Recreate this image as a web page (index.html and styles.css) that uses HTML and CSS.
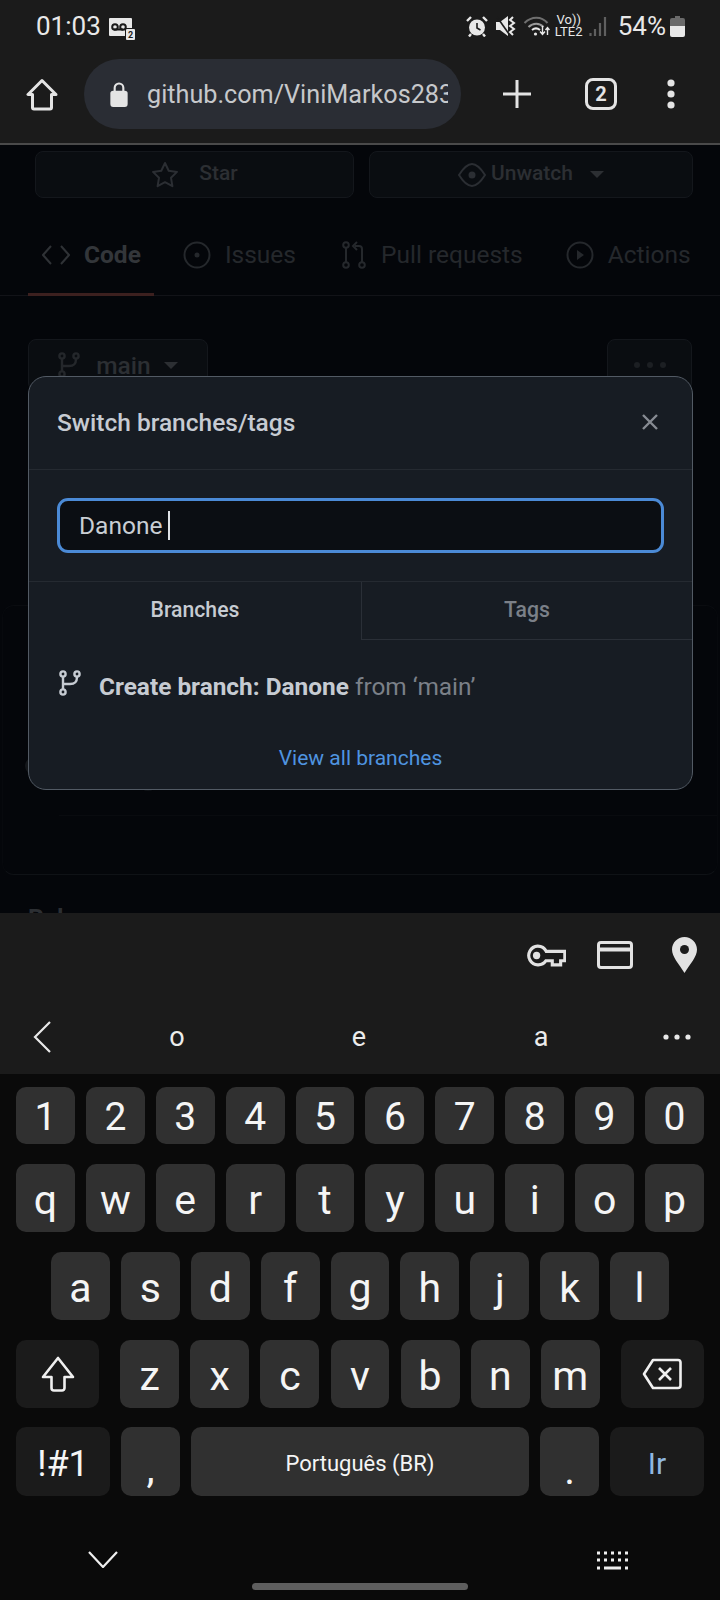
FILE: index.html
```html
<!DOCTYPE html>
<html lang="en">
  <head>
    <meta charset="UTF-8" />
    <meta name="viewport" content="width=device-width, initial-scale=1.0" />
    <title>Switch branches</title>
    <link rel="stylesheet" href="styles.css">
  </head>
  <body>
    <header class="chrome">
      <div class="statusbar">
        <span class="time">01:03</span>
        <svg class="ic-voicemail" viewBox="0 0 26 22"><path fill="#e8e8e8" d="M1 0h21a1 1 0 0 1 1 1v9h-7v8H1a1 1 0 0 1-1-1V1a1 1 0 0 1 1-1z"/><path fill="none" stroke="#1b1b1b" stroke-width="2" d="M5 11.5h9"/><circle cx="6" cy="9" r="2.8" fill="none" stroke="#1b1b1b" stroke-width="2"/><circle cx="14" cy="9" r="2.8" fill="none" stroke="#1b1b1b" stroke-width="2"/><rect x="17" y="11" width="9" height="11" rx="1" fill="#e8e8e8"/><text x="21.5" y="20" class="sim-no">2</text></svg>
        <span class="status-space"></span>
        <svg class="ic-alarm" viewBox="0 0 22 21"><circle cx="11" cy="11.5" r="8" fill="#e8e8e8"/><path d="M11 7v5l3.5 2" fill="none" stroke="#1b1b1b" stroke-width="1.6"/><path d="M1 5l4-4M21 5l-4-4M5 18l-2 2.5M17 18l2 2.5" stroke="#e8e8e8" stroke-width="2.4" fill="none"/></svg>
        <svg class="ic-mute" viewBox="0 0 20 20"><path fill="#e8e8e8" d="M0 6h4l8-6v20l-8-6H0z"/><path d="M1 1l12 17" stroke="#1b1b1b" stroke-width="1.6"/><path d="M17 1l-3 3 4 3-4 3 4 3-4 3 3 3" fill="none" stroke="#e8e8e8" stroke-width="2"/></svg>
        <svg class="ic-wifi" viewBox="0 0 26 20"><path d="M1 7c7-7 17-7 23 0" fill="none" stroke="#6f6f6f" stroke-width="2"/><path d="M5 11c4.5-4.5 11-4.5 15 0" fill="none" stroke="#9a9a9a" stroke-width="2"/><path d="M8.5 14c2.5-2 5.5-2 8 0" fill="none" stroke="#e8e8e8" stroke-width="2"/><circle cx="12" cy="18" r="1.6" fill="#e8e8e8"/><path d="M19 10v8M16.5 15.5l2.5 3 2.5-3M24 19v-7M22 14l2-2.5 2 2.5" fill="none" stroke="#e8e8e8" stroke-width="1.4"/></svg>
        <span class="volte"><span>Vo))</span><span>LTE2</span></span>
        <svg class="ic-signal" viewBox="0 0 18 19"><path d="M1.5 19v-3M6 19v-7M11 19V6M16 19V0" fill="none" stroke="#5f5f5f" stroke-width="2.2"/></svg>
        <span class="battery-pct">54%</span>
        <svg class="ic-battery" viewBox="0 0 15 21"><path fill="#6a6a6a" d="M5 0h5v2h3a2 2 0 0 1 2 2v6H0V4a2 2 0 0 1 2-2h3z"/><path fill="#e8e8e8" d="M0 10h15v9a2 2 0 0 1-2 2H2a2 2 0 0 1-2-2z"/></svg>
      </div>
      <div class="toolbar">
        <svg class="ic-home" viewBox="0 0 32 32"><path d="M16 2L2 16h4.5v13a1.5 1.5 0 0 0 1.5 1.5h16a1.5 1.5 0 0 0 1.5-1.5V16H30z" fill="none" stroke="#e4e4e4" stroke-width="3" stroke-linejoin="round"/></svg>
        <div class="omnibox">
          <svg class="ic-lock" viewBox="0 0 18 26"><path d="M4.5 10V6a4.5 4.5 0 0 1 9 0v4" fill="none" stroke="#e4e4e4" stroke-width="2.2"/><rect x="0" y="9" width="18" height="17" rx="3" fill="#e4e4e4"/></svg>
          <span class="url">github.com/ViniMarkos283</span>
        </div>
        <svg class="ic-plus" viewBox="0 0 28 28"><path d="M14 0v28M0 14h28" stroke="#e4e4e4" stroke-width="3"/></svg>
        <span class="tabcount">2</span>
        <svg class="ic-dots" viewBox="0 0 8 30"><circle cx="4" cy="4" r="3.6" fill="#e4e4e4"/><circle cx="4" cy="15" r="3.6" fill="#e4e4e4"/><circle cx="4" cy="26" r="3.6" fill="#e4e4e4"/></svg>
      </div>
    </header>

    <main class="page">
      <div class="repo-actions">
        <div class="ghost-btn btn-star">
          <svg class="ic-star" viewBox="0 0 28 28"><path d="M14 2l3.7 7.7 8.3 1.2-6 5.9 1.4 8.4-7.4-4-7.4 4L8 16.800 2 10.900l8.300-1.200z" fill="none" stroke="#2b2e33" stroke-width="2" stroke-linejoin="round"/></svg>
          <span>Star</span>
        </div>
        <div class="ghost-btn btn-watch">
          <svg class="ic-eye" viewBox="0 0 28 28"><path d="M1 14C6 6 10 3 14 3s8 3 13 11c-5 8-9 11-13 11S6 22 1 14z" fill="none" stroke="#2b2e33" stroke-width="2"/><circle cx="14" cy="14" r="3.5" fill="#2b2e33"/></svg>
          <span>Unwatch</span>
          <i class="caret"></i>
        </div>
      </div>

      <nav class="repo-tabs">
        <div class="repo-tab tab-code">
          <svg class="ic-code" viewBox="0 0 28 22"><path d="M9 2L1 11l8 9M19 2l8 9-8 9" fill="none" stroke="#2f3236" stroke-width="2"/></svg>
          <span>Code</span>
        </div>
        <div class="repo-tab">
          <svg class="ic-tabcircle" viewBox="0 0 28 28"><circle cx="14" cy="14" r="12.5" fill="none" stroke="#25282c" stroke-width="2"/><circle cx="14" cy="14" r="2.5" fill="#25282c"/></svg>
          <span>Issues</span>
        </div>
        <div class="repo-tab tab-pull">
          <svg class="ic-pull" viewBox="0 0 24 28"><circle cx="4" cy="4" r="2.8" fill="none" stroke="#25282c" stroke-width="2"/><circle cx="4" cy="24" r="2.8" fill="none" stroke="#25282c" stroke-width="2"/><circle cx="20" cy="24" r="2.8" fill="none" stroke="#25282c" stroke-width="2"/><path d="M4 7v14M20 21V8a3 3 0 0 0-3-3h-4M15 1l-4 4 4 4" fill="none" stroke="#25282c" stroke-width="2"/></svg>
          <span>Pull requests</span>
        </div>
        <div class="repo-tab">
          <svg class="ic-tabcircle" viewBox="0 0 28 28"><circle cx="14" cy="14" r="12.5" fill="none" stroke="#25282c" stroke-width="2"/><path d="M11 9l7 5-7 5z" fill="#25282c"/></svg>
          <span>Actions</span>
        </div>
      </nav>

      <div class="branch-row">
        <div class="ghost-btn btn-main">
          <svg class="ic-branch dim" viewBox="0 0 22 26"><circle cx="4" cy="4" r="2.6" /><circle cx="18" cy="4" r="2.6" /><circle cx="4" cy="22" r="2.6" /><path d="M4 7v12M18 7c0 6-3 7-7 7H4" /></svg>
          <span>main</span>
          <i class="caret"></i>
        </div>
        <div class="ghost-btn btn-more">
          <i class="dot"></i><i class="dot"></i><i class="dot"></i>
        </div>
      </div>

      <section class="commit-box">
        <div class="commit-inner">
          <i class="blob blob-avatar"></i>
          <i class="blob blob-tail"></i>
        </div>
      </section>

      <h2 class="section-title">Releases</h2>

      <div class="modal">
        <div class="modal-head">
          <span class="modal-title">Switch branches/tags</span>
          <svg class="ic-close" viewBox="0 0 16 16"><path d="M1 1l14 14M15 1L1 15" stroke="#868b92" stroke-width="2.4"/></svg>
        </div>
        <div class="modal-search">
          <div class="search-input"><span>Danone</span><i class="caret-text"></i></div>
        </div>
        <div class="modal-tabs">
          <div class="modal-tab active">Branches</div>
          <div class="modal-tab">Tags</div>
        </div>
        <div class="create-row">
          <svg class="ic-branch" viewBox="0 0 22 26"><circle cx="4" cy="4" r="2.6" /><circle cx="18" cy="4" r="2.6" /><circle cx="4" cy="22" r="2.6" /><path d="M4 7v12M18 7c0 6-3 7-7 7H4" /></svg>
          <span><b>Create branch: Danone</b> <em>from ‘main’</em></span>
        </div>
        <a class="view-all">View all branches</a>
      </div>
    </main>

    <section class="keyboard">
      <div class="kb-tools">
        <svg class="ic-key" viewBox="0 0 38 22"><path d="M11 2a9 9 0 0 1 8.2 5H37v9h-4v4h-8v-4h-6a9 9 0 1 1-8-14z" fill="none" stroke="#e2e2e2" stroke-width="3"/><circle cx="10" cy="11" r="3.5" fill="#e2e2e2"/></svg>
        <svg class="ic-card" viewBox="0 0 36 28"><rect x="1.5" y="1.5" width="33" height="25" rx="2.5" fill="none" stroke="#e2e2e2" stroke-width="3"/><path d="M2 8.5h32" stroke="#e2e2e2" stroke-width="4"/></svg>
        <svg class="ic-pin" viewBox="0 0 25 36"><path d="M12.5 0C5.6 0 0 5.6 0 12.5 0 20 7 27 12.5 36 18 27 25 20 25 12.5 25 5.6 19.4 0 12.5 0z" fill="#e2e2e2"/><circle cx="12.5" cy="12.5" r="4.5" fill="#1b1b1b"/></svg>
      </div>
      <div class="kb-suggest">
        <svg class="ic-back" viewBox="0 0 18 32"><path d="M17 1L2 16l15 15" fill="none" stroke="#e8e8e8" stroke-width="2.2"/></svg>
        <span class="sugg">o</span>
        <span class="sugg">e</span>
        <span class="sugg">a</span>
        <svg class="ic-more" viewBox="0 0 28 6"><circle cx="3" cy="3" r="2.6" fill="#e8e8e8"/><circle cx="14" cy="3" r="2.6" fill="#e8e8e8"/><circle cx="25" cy="3" r="2.6" fill="#e8e8e8"/></svg>
      </div>
      <div class="kb-keys">
        <div class="kb-row row-num">
          <span class="key">1</span><span class="key">2</span><span class="key">3</span><span class="key">4</span><span class="key">5</span><span class="key">6</span><span class="key">7</span><span class="key">8</span><span class="key">9</span><span class="key">0</span>
        </div>
        <div class="kb-row">
          <span class="key">q</span><span class="key">w</span><span class="key">e</span><span class="key">r</span><span class="key">t</span><span class="key">y</span><span class="key">u</span><span class="key">i</span><span class="key">o</span><span class="key">p</span>
        </div>
        <div class="kb-row row-home">
          <span class="key">a</span><span class="key">s</span><span class="key">d</span><span class="key">f</span><span class="key">g</span><span class="key">h</span><span class="key">j</span><span class="key">k</span><span class="key">l</span>
        </div>
        <div class="kb-row row-shift">
          <span class="key fn key-shift"><svg class="ic-shift" viewBox="0 0 34 36"><path d="M17 2L2 21h8.5v11a2.5 2.5 0 0 0 2.5 2.5h8a2.5 2.5 0 0 0 2.5-2.5V21H32z" fill="none" stroke="#f0f0f0" stroke-width="2.6" stroke-linejoin="round"/></svg></span>
          <span class="key">z</span><span class="key">x</span><span class="key">c</span><span class="key">v</span><span class="key">b</span><span class="key">n</span><span class="key">m</span>
          <span class="key fn key-shift"><svg class="ic-del" viewBox="0 0 40 32"><path d="M11 2h25a2.5 2.5 0 0 1 2.5 2.5v23A2.5 2.5 0 0 1 36 30H11L2 16z" fill="none" stroke="#f0f0f0" stroke-width="2.6" stroke-linejoin="round"/><path d="M17 10l12 12M29 10L17 22" stroke="#f0f0f0" stroke-width="2.6"/></svg></span>
        </div>
        <div class="kb-row row-bottom">
          <span class="key fn key-sym">!#1</span>
          <span class="key key-comma">,</span>
          <span class="key key-space">Português (BR)</span>
          <span class="key key-period">.</span>
          <span class="key fn key-go">Ir</span>
        </div>
      </div>
      <div class="kb-nav">
        <svg class="ic-down" viewBox="0 0 30 17"><path d="M1 1l14 15L29 1" fill="none" stroke="#efefef" stroke-width="2.2"/></svg>
        <svg class="ic-kbd" viewBox="0 0 33 19"><path d="M1 2h3M8 2h3M15 2h3M22 2h3M29 2h3M1 9h3M8 9h3M15 9h3M22 9h3M29 9h3M1 17h3M8 17h17M29 17h3" stroke="#efefef" stroke-width="3.2"/></svg>
      </div>
      <div class="home-bar"></div>
    </section>
  </body>
</html>
```

FILE: styles.css
```css
* {
  box-sizing: border-box;
}
body {
  margin: 0;
  width: 720px;
  height: 1600px;
  display: flex;
  flex-direction: column;
  overflow: hidden;
  background-color: #04060a;
  font-family: Roboto, "Liberation Sans", sans-serif;
  color: #fff;
}
svg {
  display: block;
  flex-shrink: 0;
}

/* browser chrome */
.chrome {
  height: 145px;
  flex-shrink: 0;
  background-color: #1b1b1b;
  border-bottom: 2px solid #4a4a4a;
}
.statusbar {
  height: 59px;
  display: flex;
  align-items: center;
  padding: 0 35px 7px 36px;
  color: #e8e8e8;
}
.time {
  font-size: 26px;
  margin-right: 8px;
}
.ic-voicemail {
  width: 26px;
  height: 22px;
  margin-top: 5px;
}
.sim-no {
  font-family: Roboto, sans-serif;
  font-size: 9px;
  font-weight: 700;
  fill: #1b1b1b;
  text-anchor: middle;
}
.status-space {
  flex: 1;
}
.ic-alarm {
  width: 22px;
  height: 21px;
  margin-top: 1px;
}
.ic-mute {
  width: 20px;
  height: 20px;
  margin-left: 8px;
}
.ic-wifi {
  width: 27px;
  height: 20px;
  margin-left: 7px;
}
.volte {
  display: flex;
  flex-direction: column;
  align-items: center;
  width: 28px;
  margin-left: 5px;
  font-size: 13px;
  line-height: 12px;
}
.ic-signal {
  width: 18px;
  height: 19px;
  margin-left: 6px;
}
.battery-pct {
  font-size: 26px;
  margin-left: 11px;
}
.ic-battery {
  width: 15px;
  height: 21px;
  margin-left: 4px;
}
.toolbar {
  height: 70px;
  display: flex;
  align-items: center;
}
.ic-home {
  width: 32px;
  height: 33px;
  margin-left: 26px;
}
.omnibox {
  width: 377px;
  height: 70px;
  margin-left: 26px;
  padding-left: 26px;
  padding-right: 13px;
  display: flex;
  align-items: center;
  border-radius: 35px;
  background-color: #2a2d34;
}
.ic-lock {
  width: 18px;
  height: 25px;
}
.url {
  margin-left: 19px;
  font-size: 25.2px;
  color: #c6c8cb;
  white-space: nowrap;
  overflow: hidden;
}
.ic-plus {
  width: 28px;
  height: 28px;
  margin-left: 42px;
}
.tabcount {
  width: 32px;
  height: 32px;
  margin-left: 54px;
  display: flex;
  align-items: center;
  justify-content: center;
  border: 3px solid #e4e4e4;
  border-radius: 8px;
  font-size: 20px;
  font-weight: 700;
  color: #e4e4e4;
}
.ic-dots {
  width: 8px;
  height: 30px;
  margin-left: 50px;
}

/* dimmed repo page */
.page {
  position: relative;
  height: 768px;
  flex-shrink: 0;
  overflow: hidden;
  background-color: #04060a;
}
.ghost-btn {
  display: flex;
  align-items: center;
  justify-content: center;
  background-color: #0a0d11;
  border: 1px solid #14171c;
  border-radius: 8px;
  font-weight: 500;
  color: #2c2f33;
}
.repo-actions {
  display: flex;
  gap: 15px;
  padding: 6px 27px 0 35px;
}
.repo-actions .ghost-btn {
  height: 47px;
  font-size: 21px;
}
.repo-actions span {
  margin-top: -4px;
}
.btn-star {
  width: 319px;
  gap: 20px;
}
.btn-watch {
  flex: 1;
  gap: 5px;
}
.ic-star,
.ic-eye {
  width: 28px;
  height: 28px;
}
.caret {
  width: 0;
  height: 0;
  margin-left: 12px;
  border-left: 7px solid transparent;
  border-right: 7px solid transparent;
  border-top: 7px solid #2c2f33;
}
.repo-tabs {
  height: 98px;
  display: flex;
  align-items: center;
  padding: 16px 0 0 42px;
  gap: 43px;
  border-bottom: 1px solid #121318;
  position: relative;
}
.repo-tab {
  display: flex;
  align-items: center;
  gap: 14px;
  font-size: 24.5px;
  color: #25282c;
  white-space: nowrap;
}
.tab-code {
  font-weight: 700;
  color: #33363a;
  margin-right: -1px;
}
.tab-code::after {
  content: "";
  position: absolute;
  left: 28px;
  bottom: -1px;
  width: 126px;
  height: 3px;
  background-color: #3c201f;
}
.tab-pull {
  margin-left: 3px;
  gap: 15px;
}
.ic-code {
  width: 28px;
  height: 22px;
}
.ic-tabcircle {
  width: 28px;
  height: 28px;
}
.ic-pull {
  width: 24px;
  height: 28px;
}
.branch-row {
  display: flex;
  justify-content: space-between;
  padding: 43px 28px 0;
}
.branch-row .ghost-btn {
  height: 52px;
}
.btn-main {
  width: 180px;
  gap: 16px;
  font-size: 24.5px;
}
.btn-main .caret {
  margin-left: -3px;
}
.btn-more {
  width: 85px;
  gap: 7px;
}
.dot {
  width: 6px;
  height: 6px;
  border-radius: 50%;
  background-color: #1c1f23;
}
.ic-branch {
  width: 22px;
  height: 26px;
  fill: none;
  stroke: #c6cbd2;
  stroke-width: 2.4;
}
.ic-branch.dim {
  stroke: #24272b;
}
.commit-box {
  height: 270px;
  margin: 214px 2px 0;
  border: 1px solid #07090d;
  border-top-color: #0a0c10;
  border-bottom-color: #0f1216;
  border-radius: 12px;
}
.commit-inner {
  position: relative;
  height: 210px;
  margin-left: 56px;
  border-bottom: 1px solid #090b0f;
}
.blob {
  position: absolute;
  border-radius: 50%;
  background-color: #14171b;
}
.blob-avatar {
  left: -34px;
  top: 151px;
  width: 18px;
  height: 18px;
}
.blob-tail {
  left: 82px;
  top: 176px;
  width: 14px;
  height: 9px;
  background-color: #101317;
}
.section-title {
  margin: 28px 0 0 28px;
  font-size: 24.5px;
  font-weight: 700;
  color: #2c2f33;
}

/* branch dropdown */
.modal {
  position: absolute;
  left: 28px;
  top: 231px;
  width: 665px;
  height: 414px;
  display: flex;
  flex-direction: column;
  background-color: #171c23;
  border: 1px solid #525a64;
  border-radius: 18px;
}
.modal-head {
  height: 93px;
  flex-shrink: 0;
  display: flex;
  align-items: center;
  justify-content: space-between;
  padding: 0 34px 2px 28px;
  border-bottom: 1px solid #252a31;
}
.modal-title {
  font-size: 24.5px;
  font-weight: 500;
  color: #c6cbd2;
}
.ic-close {
  width: 16px;
  height: 16px;
}
.modal-search {
  padding: 28px 28px;
  flex-shrink: 0;
}
.search-input {
  height: 55px;
  display: flex;
  align-items: center;
  padding: 0 0 0 19px;
  background-color: #0b0e13;
  border: 3px solid #4b8ad6;
  border-radius: 11px;
  font-size: 24.5px;
  color: #c9ced4;
}
.caret-text {
  width: 2px;
  height: 29px;
  margin-left: 6px;
  background-color: #dfe2e6;
}
.modal-tabs {
  height: 59px;
  flex-shrink: 0;
  display: flex;
  border-top: 1px solid #252a31;
}
.modal-tab {
  flex: 1;
  display: flex;
  align-items: center;
  justify-content: center;
  padding-bottom: 3px;
  font-size: 21.2px;
  font-weight: 500;
  color: #7b8088;
  border-bottom: 1px solid #2a2f37;
}
.modal-tab.active {
  flex: 0 0 333px;
  color: #c6cbd2;
  border-bottom: none;
  border-right: 1px solid #2a2f37;
}
.create-row {
  display: flex;
  align-items: flex-start;
  gap: 18px;
  padding: 30px 0 0 30px;
  font-size: 24.4px;
  line-height: 33px;
}
.create-row b {
  font-weight: 700;
  color: #c6cbd2;
}
.create-row em {
  font-style: normal;
  color: #7b8088;
}
.view-all {
  margin-top: 43px;
  text-align: center;
  font-size: 21px;
  color: #4f94e0;
}

/* keyboard */
.keyboard {
  flex: 1;
  display: flex;
  flex-direction: column;
  background-color: #0a0a0a;
}
.kb-tools {
  height: 91px;
  display: flex;
  align-items: center;
  justify-content: flex-end;
  padding: 0 23px 7px 0;
  background-color: #1b1b1b;
}
.ic-key {
  width: 40px;
  height: 23px;
}
.ic-card {
  width: 36px;
  height: 28px;
  margin-left: 31px;
}
.ic-pin {
  width: 25px;
  height: 36px;
  margin-left: 39px;
}
.kb-suggest {
  height: 70px;
  display: flex;
  align-items: center;
  padding: 0 29px 5px 33px;
  background-color: #1b1b1b;
}
.ic-back {
  width: 18px;
  height: 32px;
}
.sugg {
  width: 182px;
  text-align: center;
  font-size: 27px;
  color: #ececec;
}
.sugg:nth-of-type(1) {
  margin-left: 35px;
}
.ic-more {
  width: 28px;
  height: 6px;
  margin-left: 31px;
}
.kb-keys {
  display: flex;
  flex-direction: column;
  gap: 20px;
  padding: 13px 16px 0;
}
.kb-row {
  display: flex;
  gap: 11px;
  height: 68px;
}
.row-num {
  height: 57px;
}
.row-home {
  padding-left: 35px;
}
.row-shift {
  justify-content: space-between;
}
.row-bottom {
  height: 69px;
  margin-top: -1px;
}
.key {
  width: 58.9px;
  flex-shrink: 0;
  display: flex;
  align-items: center;
  justify-content: center;
  padding-top: 4px;
  background-color: #303030;
  border-radius: 10px;
  font-size: 41px;
  color: #f5f5f5;
}
.row-num .key {
  font-size: 39px;
  padding-top: 3px;
}
.fn {
  background-color: #1b1b1b;
}
.key-shift {
  width: 83px;
  padding-top: 0;
}
.key-shift:first-child {
  margin-right: 10px;
}
.key-shift:last-child {
  margin-left: 10px;
}
.ic-shift {
  width: 34px;
  height: 36px;
}
.ic-del {
  width: 40px;
  height: 32px;
}
.key-sym {
  width: 94px;
  font-size: 36px;
}
.key-comma {
  padding-top: 12px;
}
.key-period {
  padding-top: 16px;
}
.key-space {
  flex: 1;
  font-size: 22px;
}
.key-go {
  width: 94px;
  font-size: 30px;
  color: #8fb8e0;
}
.kb-nav {
  display: flex;
  align-items: flex-start;
  justify-content: space-between;
  margin-top: 55px;
  height: 19px;
  padding: 0 91px 0 88px;
}
.ic-down {
  width: 30px;
  height: 17px;
}
.ic-kbd {
  width: 33px;
  height: 19px;
}
.home-bar {
  width: 216px;
  height: 7px;
  margin: 13px auto 0;
  border-radius: 4px;
  background-color: #5e5e5e;
}
```
